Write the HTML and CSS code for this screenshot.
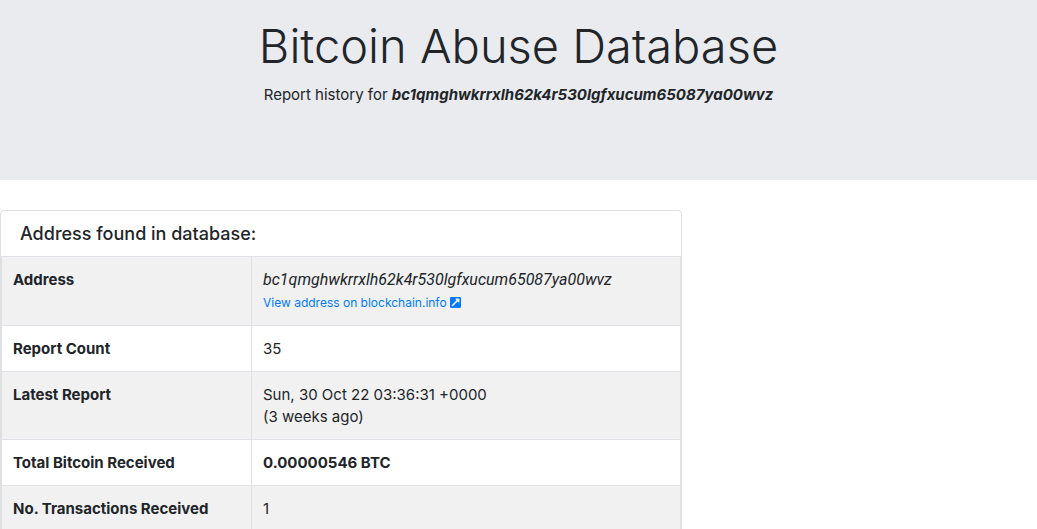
FILE: index.html
```html
<!DOCTYPE html>
<html lang="en">
  <head>
    <meta charset="UTF-8" />
    <meta name="viewport" content="width=device-width, initial-scale=1.0" />
    <title>Bitcoin Abuse Database</title>
    <link rel="stylesheet" href="styles.css">
  </head>
  <body>
    <header class="jumbotron">
      <h1>Bitcoin Abuse Database</h1>
      <p>Report history for <strong><em>bc1qmghwkrrxlh62k4r530lgfxucum65087ya00wvz</em></strong></p>
    </header>
    <main class="row">
      <section class="card">
        <h2 class="card-header" id="found">Address found in database:</h2>
        <table class="table" aria-labelledby="found">
          <tbody>
            <tr>
              <th scope="row">Address</th>
              <td>
                <em class="address">bc1qmghwkrrxlh62k4r530lgfxucum65087ya00wvz</em><br>
                <a href="#" class="explorer">View address on blockchain.info <svg class="icon" viewBox="0 32 448 448" aria-hidden="true"><path fill="currentColor" d="M448 80v352c0 26.51-21.49 48-48 48H48c-26.51 0-48-21.49-48-48V80c0-26.51 21.49-48 48-48h352c26.51 0 48 21.49 48 48zm-88 16H248.029c-21.313 0-32.08 25.861-16.971 40.971l31.984 31.987L67.515 364.485c-4.686 4.686-4.686 12.284 0 16.971l31.029 31.029c4.687 4.686 12.285 4.686 16.971 0l195.526-195.526 31.988 31.991C358.058 263.977 384 253.425 384 231.979V120c0-13.255-10.745-24-24-24z"/></svg></a>
              </td>
            </tr>
            <tr>
              <th scope="row">Report Count</th>
              <td>35</td>
            </tr>
            <tr>
              <th scope="row">Latest Report</th>
              <td>Sun, 30 Oct 22 03:36:31 +0000<br>(3 weeks ago)</td>
            </tr>
            <tr>
              <th scope="row">Total Bitcoin Received</th>
              <td><strong>0.00000546 BTC</strong></td>
            </tr>
            <tr>
              <th scope="row">No. Transactions Received</th>
              <td>1</td>
            </tr>
          </tbody>
        </table>
      </section>
    </main>
  </body>
</html>
```

FILE: styles.css
```css
* {
  box-sizing: border-box;
}
body {
  margin: 0;
  font-family: Inter, "Liberation Sans", sans-serif;
  font-size: 15px;
  line-height: 22px;
  color: #212529;
  background-color: #fff;
  overflow: hidden;
}
.jumbotron {
  padding: 16px 16px 74px;
  margin-bottom: 30px;
  text-align: center;
  background-color: #e9ebef;
}
.jumbotron h1 {
  margin: 0 0 9px;
  font-size: 47px;
  font-weight: 300;
  line-height: 59px;
}
.jumbotron p {
  margin: 0;
}
.card {
  width: 65.8%;
  border: 1px solid #dfdfdf;
  border-radius: 4px;
}
.card-header {
  margin: 0;
  padding: 11px 19px;
  font-size: 18px;
  font-weight: 500;
  line-height: 23px;
}
.table {
  width: 100%;
  border-collapse: collapse;
}
.table th,
.table td {
  padding: 12px 11px 11px;
  border: 1px solid #dee2e6;
  text-align: left;
  vertical-align: top;
}
.table th {
  width: 250px;
}
.table tr:nth-child(odd) {
  background-color: #f1f1f1;
}
.address {
  font-family: Roboto, "Liberation Sans", sans-serif;
  font-size: 16px;
}
.explorer {
  font-size: 12px;
  color: #007bff;
  text-decoration: none;
}
.icon {
  width: 11px;
  height: 11px;
  vertical-align: -1px;
}
```
